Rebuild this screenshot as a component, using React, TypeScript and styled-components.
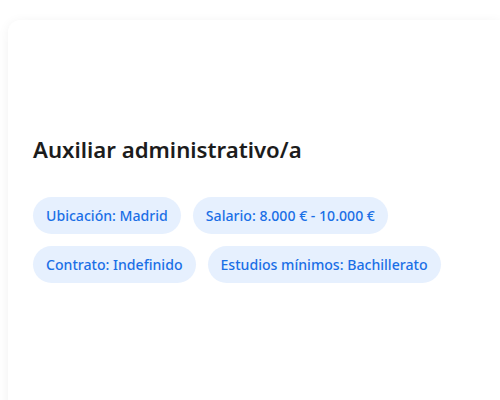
import React from 'react';
import styled, { createGlobalStyle } from 'styled-components';

const GlobalStyle = createGlobalStyle`
  html, body {
    margin: 0;
    padding: 0;
    background: #ffffff;
    font-family: "Noto Sans", "Open Sans", sans-serif;
  }
`;

const Page = styled.div`
  padding: 20px 0 0 8px;
  height: 400px;
  box-sizing: border-box;
  overflow: hidden;
`;

const Card = styled.section`
  background: #ffffff;
  border-radius: 12px 0 0 0;
  box-shadow: 0 2px 12px rgba(0, 0, 0, 0.06);
  padding: 116px 24px 120px 25px;
  min-height: 400px;
`;

const Title = styled.h2`
  margin: 0 0 33px;
  font-size: 22.2px;
  font-weight: 600;
  color: #1c1c1c;
  line-height: 28px;
`;

const Tags = styled.div`
  display: flex;
  flex-wrap: wrap;
  gap: 12px;
  max-width: 420px;
`;

const Tag = styled.span`
  display: inline-flex;
  align-items: center;
  height: 37px;
  padding: 0 13px;
  border-radius: 19px;
  background: #e6f0fe;
  color: #1a6fe6;
  font-size: 14.1px;
  font-weight: 500;
  white-space: nowrap;
`;

const tags = [
  'Ubicación: Madrid',
  'Salario: 8.000 € - 10.000 €',
  'Contrato: Indefinido',
  'Estudios mínimos: Bachillerato',
];

export default function App() {
  return (
    <>
      <GlobalStyle />
      <Page>
        <Card>
          <Title>Auxiliar administrativo/a</Title>
          <Tags>
            {tags.map((t) => (
              <Tag key={t}>{t}</Tag>
            ))}
          </Tags>
        </Card>
      </Page>
    </>
  );
}
